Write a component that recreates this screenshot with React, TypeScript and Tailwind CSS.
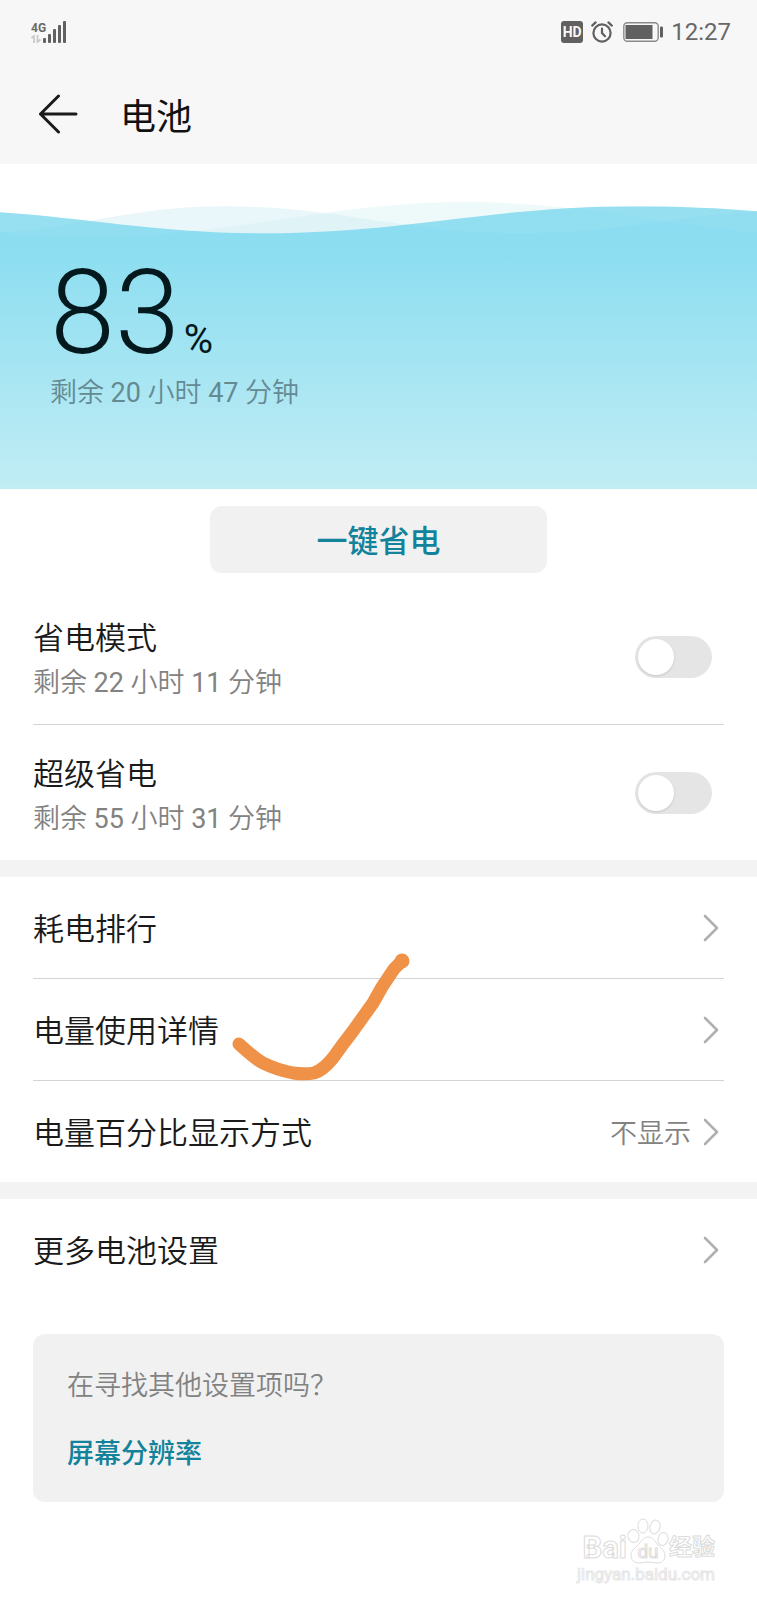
import React, { useState } from 'react';

const FONT = "font-['Roboto','Noto_Sans_CJK_SC',sans-serif]";

const SignalIcon = () => (
  <div className="flex items-end">
    <div className="flex w-3 flex-col items-start">
      <span className="text-[12px] leading-[14px] font-bold text-[#6a6a6a]">4G</span>
      <svg className="h-2 w-[10px]" viewBox="0 0 10 8" fill="none" stroke="#c9c9c9" strokeWidth="1.8" aria-hidden="true">
        <path d="M0.5 3 3 1v7M6.5 0v7L9.5 4.500" />
      </svg>
    </div>
    <svg className="h-[22px] w-6" viewBox="0 0 24 22" fill="#606060" aria-hidden="true">
      <rect x="0" y="17" width="3" height="5" rx="1" />
      <rect x="5" y="13" width="3" height="9" rx="1" />
      <rect x="10" y="8" width="3" height="14" rx="1" />
      <rect x="15" y="4" width="3" height="18" rx="1" />
      <rect x="20" y="0" width="3" height="22" rx="1" />
    </svg>
  </div>
);

const AlarmIcon = () => (
  <svg className="h-[22px] w-[22px]" viewBox="0 0 22 22" fill="none" stroke="#606060" strokeLinecap="round" aria-hidden="true">
    <circle cx="11" cy="12" r="8.6" strokeWidth="2.2" />
    <path d="M11 7.5V12l3 3.2" strokeWidth="2.2" />
    <path d="M1.2 4.6 4.6 1.4M20.8 4.6 17.4 1.4" strokeWidth="2.2" />
  </svg>
);

const BatteryIcon = () => (
  <svg className="h-5 w-10" viewBox="0 0 40 20" aria-hidden="true">
    <rect x="0.8" y="0.8" width="34.4" height="18.4" rx="3.5" fill="none" stroke="#8a8a8a" strokeWidth="1.4" />
    <rect x="2.5" y="3" width="27" height="14" fill="#606060" />
    <rect x="37" y="4.5" width="3" height="11" rx="1.2" fill="#606060" />
  </svg>
);

const Chevron = () => (
  <svg className="h-7 w-4" viewBox="0 0 16 28" fill="none" stroke="#b0b0b0" strokeWidth="2.6" strokeLinecap="round" strokeLinejoin="round" aria-hidden="true">
    <path d="M2 2 14 14 2 26" />
  </svg>
);

const Waves = () => (
  <svg className="absolute inset-0 h-full w-full" viewBox="0 0 757 324" preserveAspectRatio="none" aria-hidden="true">
    <defs>
      <linearGradient id="water" x1="0" y1="0" x2="0" y2="1">
        <stop offset="0" stopColor="#8adcf0" />
        <stop offset="0.2" stopColor="#8edef1" />
        <stop offset="1" stopColor="#c1edf4" />
      </linearGradient>
      <clipPath id="surface">
        <path d="M0 48C90 54 160 69 265 69C400 69 500 42 630 42C680 42 720 44 757 47V324H0Z" />
      </clipPath>
    </defs>
    <path d="M0 68C70 66 130 42 222 42C340 42 400 69 521 69C620 69 680 50 757 48V90H0Z" fill="#cdebf2" fillOpacity="0.42" />
    <path d="M0 68C30 72 60 73 90 73C230 73 330 38 465 38C580 38 660 60 757 68V90H0Z" fill="#cdeff2" fillOpacity="0.35" />
    <g clipPath="url(#surface)">
      <rect y="38" width="757" height="286" fill="url(#water)" />
      <path d="M0 30H757V48C680 50 620 69 521 69C400 69 340 42 222 42C130 42 70 66 0 68Z" fill="#ffffff" fillOpacity="0.06" />
      <path d="M0 30H757V68C660 60 580 38 465 38C330 38 230 73 90 73C60 73 30 72 0 68Z" fill="#ffffff" fillOpacity="0.05" />
    </g>
  </svg>
);

const CheckMark = () => (
  <svg className="pointer-events-none absolute -top-[26px] left-[198px] h-[130px] w-[182px]" viewBox="0 0 182 130" fill="none" stroke="#ef9248" strokeLinecap="round" strokeLinejoin="round" aria-hidden="true">
    <path d="M8 91C17 99 24 106 32 110C42 115 52 118 62 120C70 121 78 121 83 120C90 118 97 111 102 105C109 95 115 87 122 78L142 50L151 34L163 16L171 8" strokeWidth="13" />
    <circle cx="171" cy="8" r="1.500" strokeWidth="12" />
  </svg>
);

interface TimeLeft {
  hours: number;
  minutes: number;
}

const Remaining: React.FC<TimeLeft> = ({ hours, minutes }) => (
  <>
    剩余 <span className="font-normal">{hours}</span> 小时 <span className="font-normal">{minutes}</span> 分钟
  </>
);

interface SwitchRowProps extends TimeLeft {
  id: string;
  title: string;
}

const SwitchRow: React.FC<SwitchRowProps> = ({ id, title, hours, minutes }) => {
  const [on, setOn] = useState(false);

  return (
    <div className="flex h-[135px] items-center justify-between pr-3">
      <label htmlFor={id} className="flex flex-col pt-2">
        <span className="text-[31px] leading-[44px] font-[350] text-[#1a1a1a]">{title}</span>
        <span className="text-[27px] leading-[44px] font-[350] text-[#828282]">
          <Remaining hours={hours} minutes={minutes} />
        </span>
      </label>
      <input
        id={id}
        type="checkbox"
        checked={on}
        onChange={(e) => setOn(e.target.checked)}
        className="h-[42px] w-[77px] shrink-0 cursor-pointer appearance-none rounded-full bg-[#e5e5e5] p-[3px] before:block before:h-9 before:w-9 before:rounded-full before:bg-white before:shadow-sm checked:bg-[#12839b] checked:before:ml-auto"
      />
    </div>
  );
};

interface LinkRowProps {
  title: string;
  value?: string;
  children?: React.ReactNode;
}

const LinkRow: React.FC<LinkRowProps> = ({ title, value, children }) => (
  <div className="relative">
    <button type="button" className="flex h-[101px] w-full cursor-pointer items-center justify-between pr-[5px] text-left">
      <span className="pt-1 text-[31px] leading-[44px] font-[350] text-[#1a1a1a]">{title}</span>
      <span className="flex items-center gap-3">
        {value && <span className="pt-1 text-[27px] leading-[44px] font-[350] text-[#828282]">{value}</span>}
        <Chevron />
      </span>
    </button>
    {children}
  </div>
);

const Watermark = () => (
  <div className="mr-[42px] flex flex-col items-end text-white">
    <div className="flex items-end [-webkit-text-stroke:1px_#dcdcdc]">
      <span className="text-[31px] leading-8 font-bold">Bai</span>
      <div className="relative h-[46px] w-[42px]">
        <svg className="h-full w-full" viewBox="0 0 42 46" fill="#ffffff" stroke="#dcdcdc" aria-hidden="true">
          <ellipse cx="6.500" cy="18" rx="5.500" ry="6.500" transform="rotate(-12 6.500 18)" />
          <ellipse cx="16" cy="8" rx="5" ry="7" />
          <ellipse cx="28" cy="9" rx="5" ry="7" transform="rotate(14 28 9)" />
          <ellipse cx="36" cy="21" rx="5" ry="6.500" transform="rotate(14 36 21)" />
          <path d="M21 19c5 0 7 4 10 8 3 3 7 6 7 11 0 5-4 7-8 7-3 0-5-1-9-1s-6 1-9 1c-5 0-8-3-8-8 0-4 3-6 6-9 4-4 6-9 11-9z" />
        </svg>
        <span className="absolute inset-x-0 bottom-0 text-center text-[19px] leading-6">du</span>
      </div>
      <span className="text-[23px] leading-8 font-bold">经验</span>
    </div>
    <span className="text-[17px] leading-5 [-webkit-text-stroke:1px_#e6e6e6]">jingyan.baidu.com</span>
  </div>
);

const App: React.FC = () => {
  return (
    <div className={`min-h-screen bg-white ${FONT}`}>
      {/* Status bar and title */}
      <header className="h-[164px] bg-[#f7f7f7]">
        <div className="flex h-16 items-center justify-between pr-[26px] pl-[31px]">
          <SignalIcon />
          <div className="flex items-center">
            <span className="mr-2 flex h-[22px] w-[22px] items-center justify-center rounded-[3px] bg-[#606060] text-[14px] leading-4 font-bold text-[#f7f7f7]">HD</span>
            <AlarmIcon />
            <span className="mr-2 ml-2.5">
              <BatteryIcon />
            </span>
            <span className="text-[24px] leading-8 text-[#686868]">12:27</span>
          </div>
        </div>
        <div className="flex h-[100px] items-center gap-[42px] pl-[38px]">
          <button type="button" aria-label="返回" className="cursor-pointer">
            <svg className="h-10 w-10" viewBox="0 0 40 40" fill="none" stroke="#1a1a1a" strokeWidth="3" strokeLinecap="round" strokeLinejoin="round" aria-hidden="true">
              <path d="M20.500 2 2.500 20 20.500 38M2.500 20H38" />
            </svg>
          </button>
          <h1 className="pt-2 text-[36px] leading-[48px] text-[#111111]">电池</h1>
        </div>
      </header>

      {/* Battery level */}
      <section className="relative h-[325px]">
        <Waves />
        <div className="relative pt-[91px] pl-[50px]">
          <p className="flex items-baseline gap-1 text-[#03191d]">
            <span className="text-[117px] leading-[116px] font-light">83</span>
            <span className="text-[40px] leading-[48px]">%</span>
          </p>
          <p className="text-[27px] leading-[44px] font-[350] text-[#648a92]">
            <Remaining hours={20} minutes={47} />
          </p>
        </div>
      </section>

      <div className="flex justify-center pt-[17px] pb-[17px]">
        <button type="button" className="h-[67px] w-[337px] cursor-pointer rounded-xl bg-[#f1f1f1] pt-1 text-[31px] leading-[44px] font-medium text-[#12839b]">
          一键省电
        </button>
      </div>

      <section className="divide-y divide-[#d4d4d4] px-[33px]">
        <SwitchRow id="saver" title="省电模式" hours={22} minutes={11} />
        <SwitchRow id="ultra" title="超级省电" hours={55} minutes={31} />
      </section>

      <div className="h-[17px] bg-[#f3f3f3]" />

      <section className="divide-y divide-[#d4d4d4] px-[33px]">
        <LinkRow title="耗电排行" />
        <LinkRow title="电量使用详情">
          <CheckMark />
        </LinkRow>
        <LinkRow title="电量百分比显示方式" value="不显示" />
      </section>

      <div className="h-[17px] bg-[#f3f3f3]" />

      <section className="px-[33px]">
        <LinkRow title="更多电池设置" />
      </section>

      {/* Related settings */}
      <section className="mx-[33px] mt-[34px] flex flex-col items-start gap-6 rounded-xl bg-[#f1f1f1] px-[34px] pt-[30px] pb-[26px]">
        <p className="text-[27px] leading-[44px] font-[350] text-[#828282]">在寻找其他设置项吗？</p>
        <a href="#resolution" className="text-[27px] leading-[44px] font-medium text-[#12839b]">屏幕分辨率</a>
      </section>

      <footer className="pt-4">
        <Watermark />
      </footer>
    </div>
  );
};

export default App;
